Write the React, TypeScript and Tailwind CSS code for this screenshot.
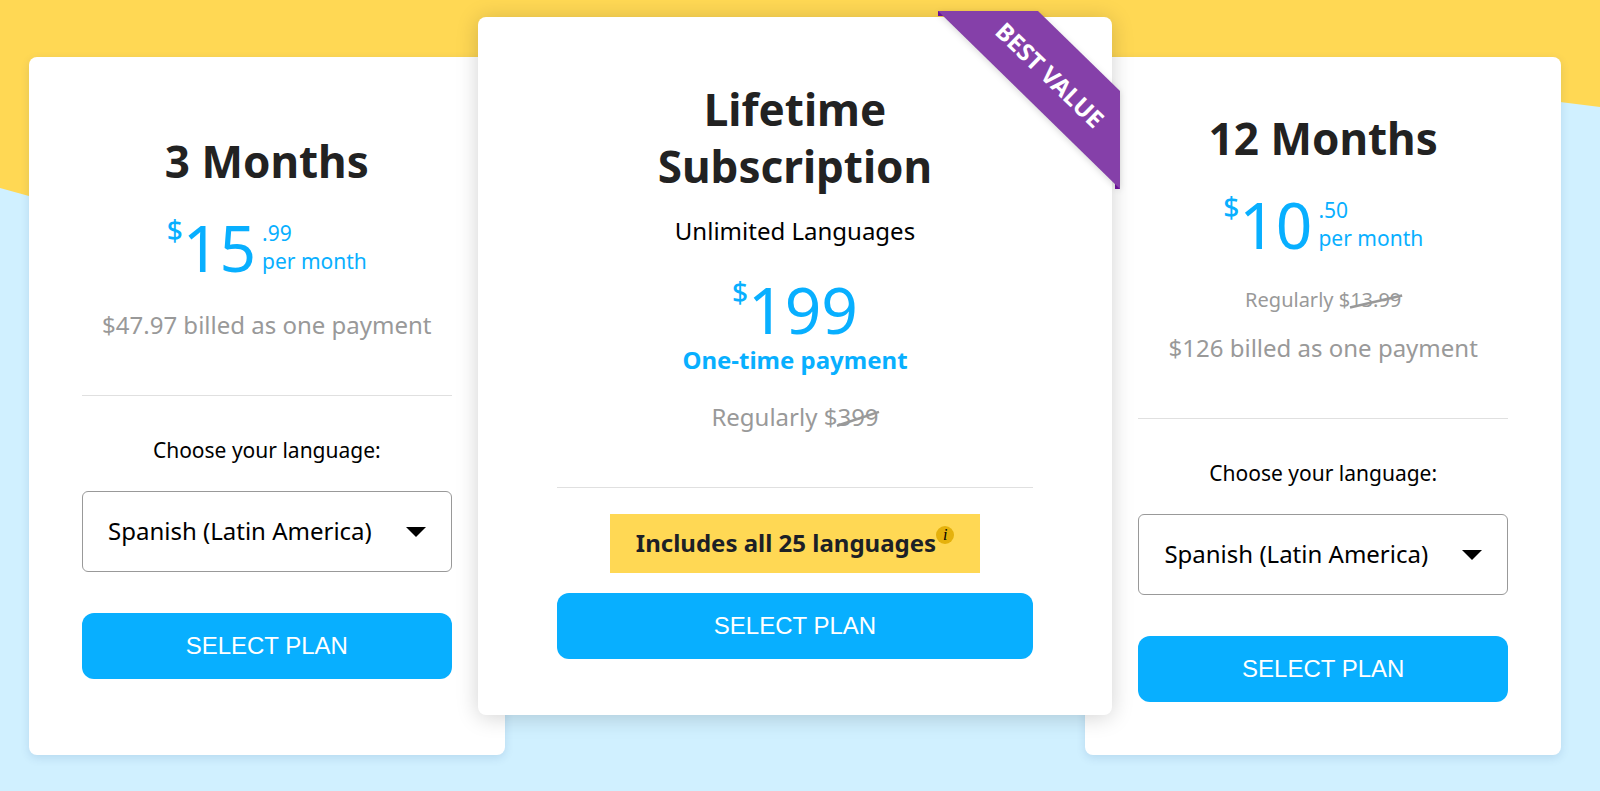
import type { ReactNode } from "react";

const LANGUAGES = ["Spanish (Latin America)", "Spanish (Spain)", "French", "German", "Italian", "Japanese"];

function Backdrop() {
  return (
    <svg
      className="absolute inset-0 -z-10 h-full w-full"
      viewBox="0 0 1600 791"
      preserveAspectRatio="none"
      aria-hidden="true"
    >
      <path d="M0 0H1600V107L1560 102C1100 55 900 400 29 196L0 188Z" fill="#ffd854" />
    </svg>
  );
}

function Title({ children }: { children: ReactNode }) {
  return (
    <h2 className="mx-auto max-w-xs text-center text-[44px] leading-[57px] font-bold text-[#222]">{children}</h2>
  );
}

function Price({ amount, cents }: { amount: string; cents?: string }) {
  return (
    <p className="flex items-start justify-center text-[#08afff]">
      <span className="text-[28px] leading-7 font-medium">$</span>
      <span className="text-[64px] leading-16">{amount}</span>
      {cents && (
        <span className="ml-[6px] flex flex-col pt-[3px] text-[21px] leading-7">
          <span>{cents}</span>
          <span>per month</span>
        </span>
      )}
    </p>
  );
}

function Struck({ children }: { children: ReactNode }) {
  return (
    <s className="relative inline-block no-underline">
      {children}
      <svg
        className="absolute inset-0 h-full w-full overflow-visible"
        viewBox="0 0 100 100"
        preserveAspectRatio="none"
        aria-hidden="true"
      >
        <line x1="0" y1="77" x2="102" y2="34" stroke="#999" strokeWidth="2.6" vectorEffect="non-scaling-stroke" />
      </svg>
    </s>
  );
}

function Rule() {
  return <hr className="mt-[54px] border-t border-[#e0e0e0]" />;
}

function SelectPlan({ className }: { className: string }) {
  return (
    <button
      type="button"
      className={`${className} h-[66px] w-full rounded-xl bg-[#08afff] font-['Liberation_Sans',Arial,sans-serif] text-2xl text-white`}
    >
      SELECT PLAN
    </button>
  );
}

function LanguagePicker({ id }: { id: string }) {
  return (
    <>
      <label htmlFor={id} className="mt-10 block text-center text-[21px] leading-7">
        Choose your language:
      </label>
      <div className="relative mt-[27px]">
        <select
          id={id}
          className="block h-[81px] w-full appearance-none rounded-md border border-[#999] bg-white pr-16 pb-[2px] pl-[25px] text-2xl text-black"
        >
          {LANGUAGES.map((language) => (
            <option key={language}>{language}</option>
          ))}
        </select>
        <svg
          className="pointer-events-none absolute inset-y-0 right-[26px] my-auto h-[10px] w-5"
          viewBox="0 0 20 10"
          aria-hidden="true"
        >
          <path d="M0 0H20L10 10Z" fill="#000" />
        </svg>
      </div>
    </>
  );
}

type MonthlyProps = {
  id: string;
  className: string;
  title: string;
  amount: string;
  cents: string;
  regular?: string;
  billed: string;
};

function MonthlyCard({ id, className, title, amount, cents, regular, billed }: MonthlyProps) {
  return (
    <article
      className={`${className} mt-10 flex flex-col justify-center rounded-lg bg-white px-[53px] shadow-[0_3px_10px_rgba(0,60,120,0.12)]`}
    >
      <Title>{title}</Title>
      <div className="mt-[26px]">
        <Price amount={amount} cents={cents} />
      </div>
      {regular && (
        <p className="mt-[29px] -mb-[11px] text-center text-xl leading-7 text-[#999]">
          Regularly $<Struck>{regular}</Struck>
        </p>
      )}
      <p className="mt-[29px] text-center text-2xl leading-8 text-[#999]">{billed}</p>
      <Rule />
      <LanguagePicker id={id} />
      <SelectPlan className="mt-[41px]" />
    </article>
  );
}

function Ribbon() {
  return (
    <div className="absolute -top-[6px] -right-2 h-[178px] w-[182px]">
      <svg className="absolute inset-0 overflow-visible" width="182" height="178" viewBox="0 0 182 178" aria-hidden="true">
        <path d="M0 0H6V5H0ZM177 173H182V178H177Z" fill="#6d129c" />
        <path
          d="M0 0H100L182 80V178Z"
          fill="#8540a9"
          className="drop-shadow-[0_2px_3px_rgba(0,0,0,0.15)]"
        />
      </svg>
      <span className="absolute top-16 left-28 -translate-x-1/2 -translate-y-1/2 rotate-[44deg] text-2xl leading-8 font-bold whitespace-nowrap text-white">
        BEST VALUE
      </span>
    </div>
  );
}

function LifetimeCard() {
  return (
    <article className="relative z-10 -mx-[11px] mb-10 flex flex-col rounded-lg bg-white px-[79px] pt-16 pb-14 shadow-[0_2px_22px_rgba(0,0,0,0.18)]">
      <Ribbon />
      <Title>Lifetime Subscription</Title>
      <p className="mt-5 text-center text-2xl leading-8">Unlimited Languages</p>
      <div className="mt-[31px]">
        <Price amount="199" />
      </div>
      <p className="mt-[2px] text-center text-2xl leading-8 font-bold text-[#08afff]">One-time payment</p>
      <p className="mt-[25px] text-center text-2xl leading-8 text-[#999]">
        Regularly $<Struck>399</Struck>
      </p>
      <Rule />
      <div className="mt-[26px] flex items-start self-center bg-[#ffd854] px-[26px] pt-[13px] pb-[14px] text-2xl leading-8 font-bold text-[#1c2026]">
        <span>Includes all 25 languages</span>
        <button
          type="button"
          aria-label="About the languages"
          className="-mt-px flex size-[18px] items-center justify-center rounded-full bg-[#e5b10c] font-['Liberation_Serif',serif] text-base leading-4 font-normal text-black italic"
        >
          i
        </button>
      </div>
      <SelectPlan className="mt-5" />
    </article>
  );
}

export default function App() {
  return (
    <main className="relative isolate min-h-screen bg-[#d0f0ff] pt-[17px] pr-[39px] pb-9 pl-[29px] font-['Noto_Sans',sans-serif] text-black">
      <Backdrop />
      <section className="grid grid-cols-[3fr_4fr_3fr] items-stretch" aria-label="Plans">
        <MonthlyCard
          id="language-3"
          className="-mr-4"
          title="3 Months"
          amount="15"
          cents=".99"
          billed="$47.97 billed as one payment"
        />
        <LifetimeCard />
        <MonthlyCard
          id="language-12"
          className="-ml-4"
          title="12 Months"
          amount="10"
          cents=".50"
          regular="13.99"
          billed="$126 billed as one payment"
        />
      </section>
    </main>
  );
}
